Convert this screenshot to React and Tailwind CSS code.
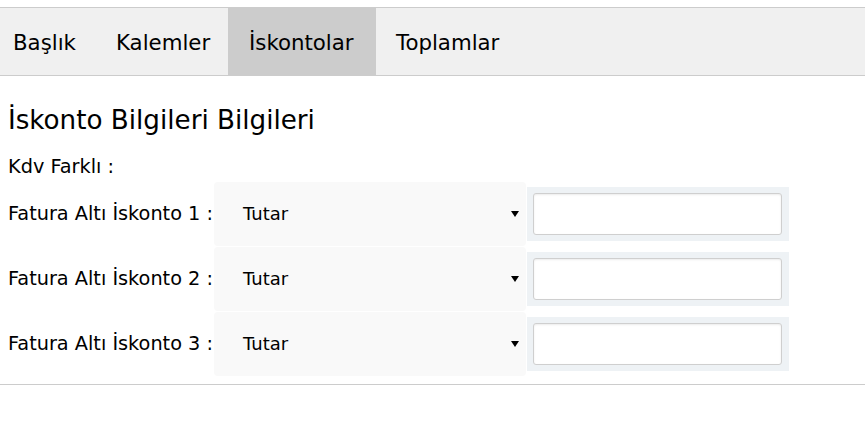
import { useState } from "react";

const tabs = [
  { label: "Başlık", cls: "w-[96px] pl-[13px]" },
  { label: "Kalemler", cls: "w-[132px] pl-5" },
  { label: "İskontolar", cls: "w-[148px] pl-[21px]" },
  { label: "Toplamlar", cls: "w-[144px] pl-5" },
];

function DiscountRow({ no }) {
  const [value, setValue] = useState("");

  return (
    <div className="flex items-center h-16">
      <span className="w-[206px] text-[19.3px] leading-[22px] whitespace-nowrap">
        Fatura Altı İskonto {no} :
      </span>
      <div className="w-[312px] h-16 bg-[#f9f9f9] rounded flex items-center justify-between pl-[29px] pr-[7px]">
        <span className="text-[18px] leading-[22px]">Tutar</span>
        <span className="w-0 h-0 border-l-[4px] border-r-[4px] border-t-[6px] border-l-transparent border-r-transparent border-t-black" />
      </div>
      <div className="ml-px w-[262px] h-[54px] bg-[#eef2f5] flex pl-[6px] pr-[7px] py-[6px]">
        <input
          value={value}
          onChange={(e) => setValue(e.target.value)}
          className="flex-1 min-w-0 bg-white border border-[#cfcfcf] rounded-[3px] shadow-[inset_0_1px_2px_rgba(0,0,0,0.08)] outline-none px-2 text-[16px]"
        />
      </div>
    </div>
  );
}

export default function App() {
  const active = "İskontolar";

  return (
    <div className="min-h-[436px] bg-white text-black font-['DejaVu_Sans',Verdana,sans-serif] pt-[7px]">
      {/* sekmeler */}
      <div className="flex h-[69px] bg-[#f0f0f0] border-y border-[#cccccc]">
        {tabs.map((t) => (
          <div
            key={t.label}
            className={`${t.cls} flex items-center pt-[3px] text-[21.3px] leading-[24px] whitespace-nowrap ${
              t.label === active ? "bg-[#cccccc]" : ""
            }`}
          >
            {t.label}
          </div>
        ))}
      </div>

      <div className="px-2">
        <h2 className="mt-[29px] text-[26.2px] leading-[30px]">
          İskonto Bilgileri Bilgileri
        </h2>
        <div className="mt-[21px] text-[19.3px] leading-[22px]">Kdv Farklı :</div>
        <div className="mt-[4px] flex flex-col gap-px">
          <DiscountRow no={1} />
          <DiscountRow no={2} />
          <DiscountRow no={3} />
        </div>
      </div>
      <div className="mt-[8px] border-t border-[#cccccc]" />
    </div>
  );
}
